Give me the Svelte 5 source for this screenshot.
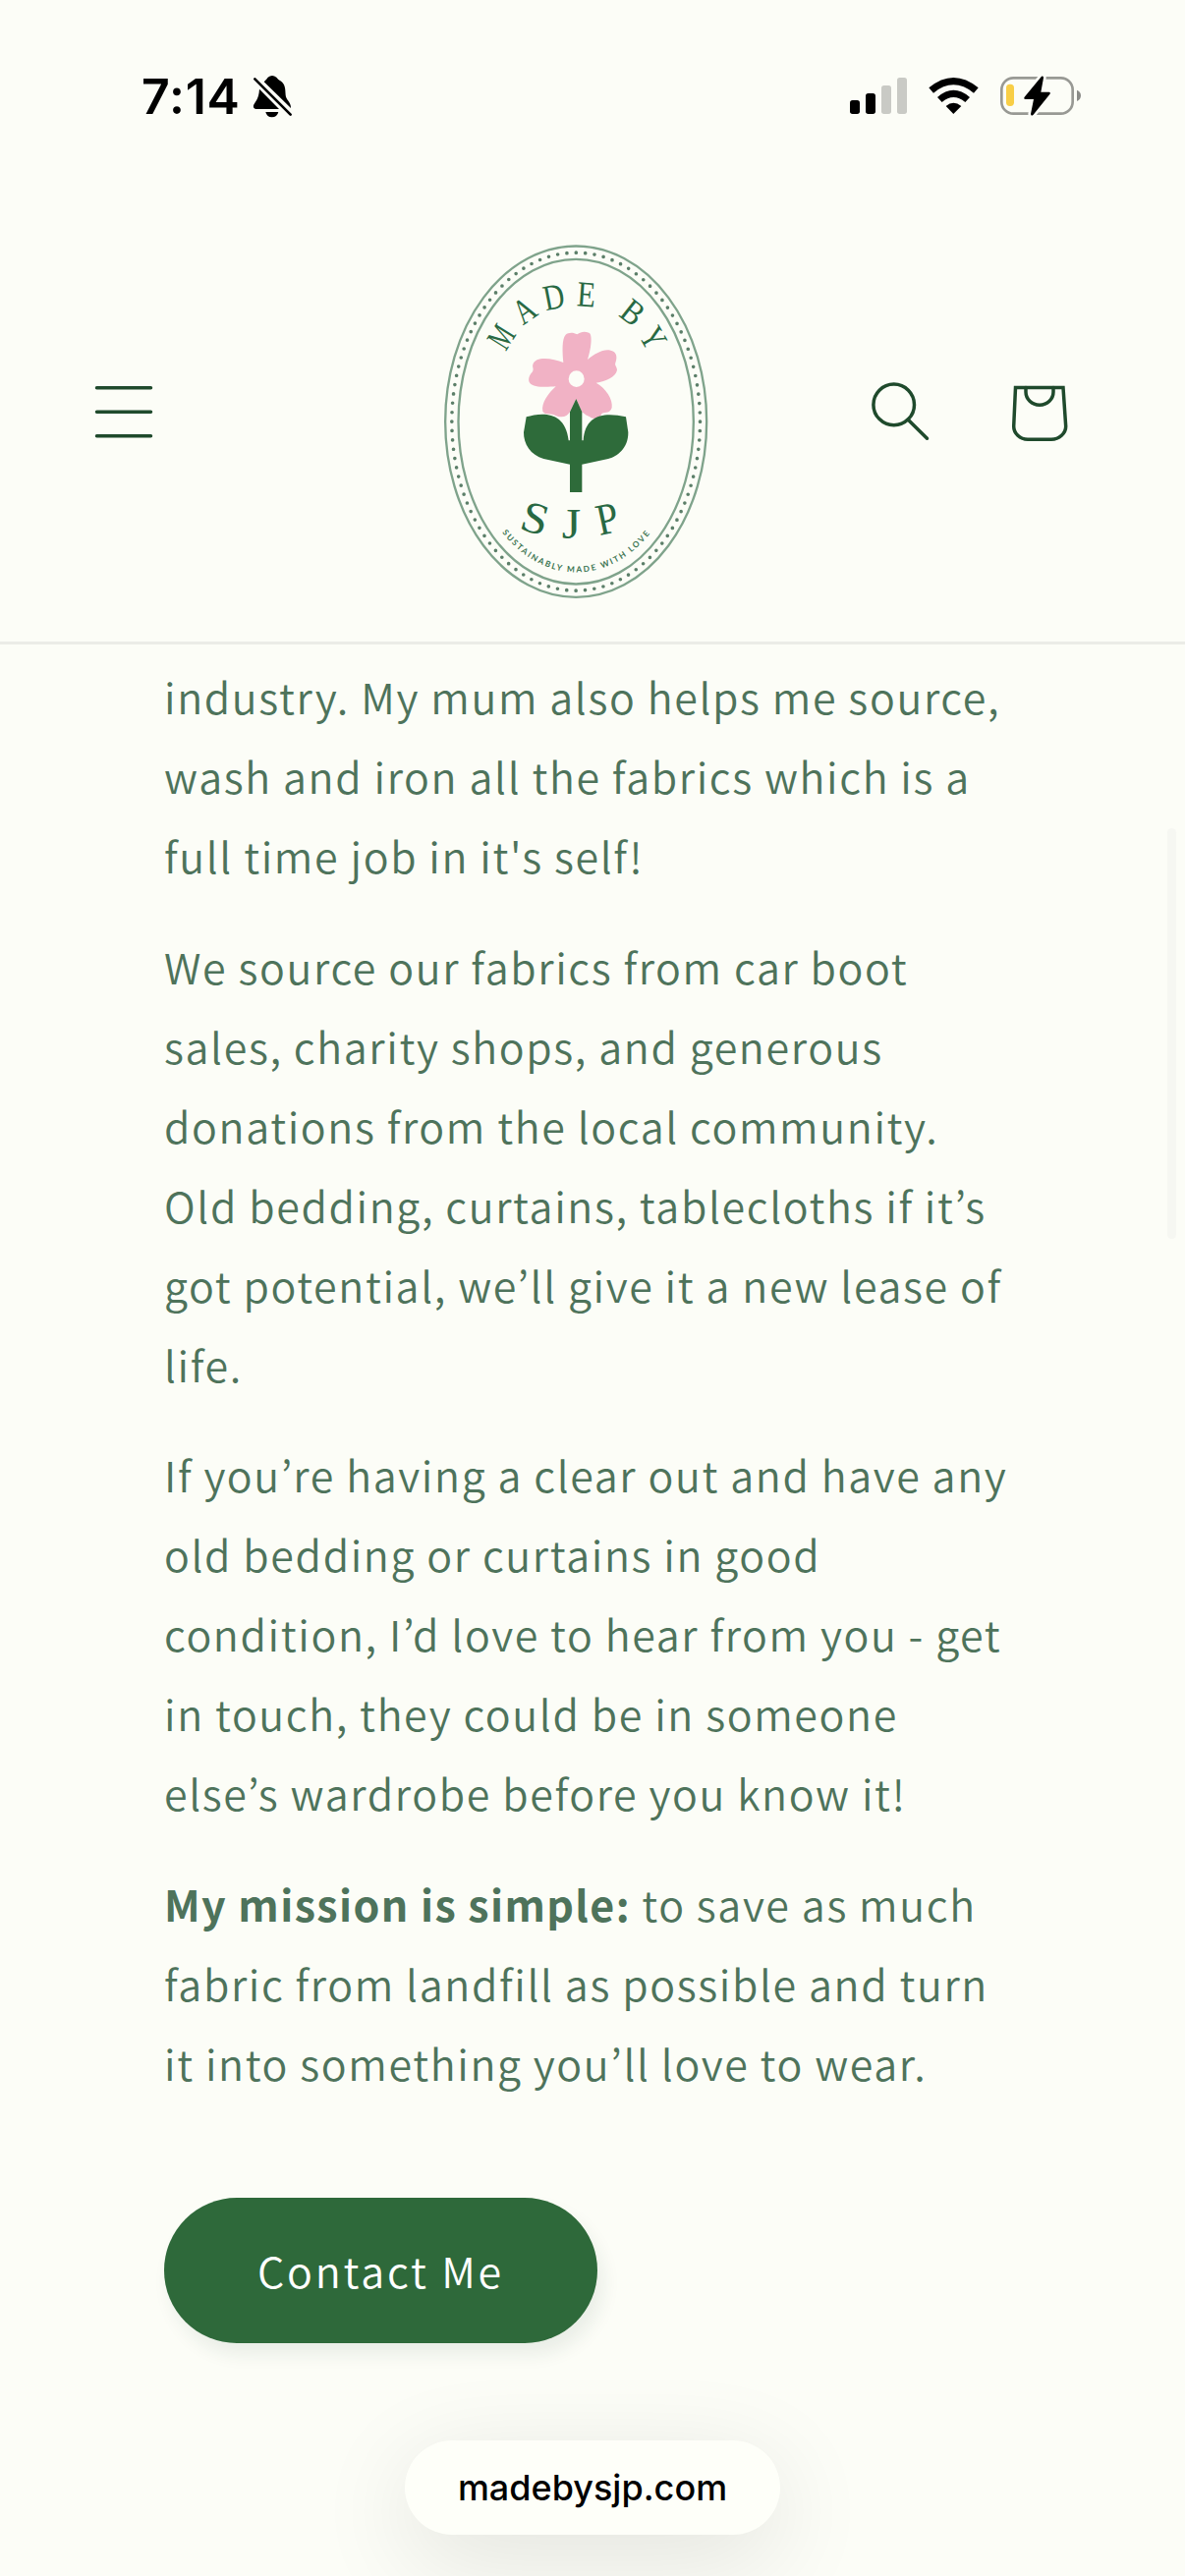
<script>
	const signal = [
		{ x: 75, y: 156, on: true },
		{ x: 123, y: 135, on: true },
		{ x: 171, y: 111, on: false },
		{ x: 219, y: 87, on: false }
	];

	// badge lettering: baseline centre, rotation, horizontal squeeze, size
	const letters = [
		{ char: 'M', x: 271, y: 357, rotate: -58, squeeze: 0.66, size: 108 },
		{ char: 'A', x: 332, y: 287, rotate: -35, squeeze: 0.78, size: 108 },
		{ char: 'D', x: 408, y: 253, rotate: -11, squeeze: 0.8, size: 110 },
		{ char: 'E', x: 498, y: 246, rotate: 4, squeeze: 0.84, size: 110 },
		{ char: 'B', x: 620, y: 292, rotate: 38, squeeze: 0.86, size: 106 },
		{ char: 'Y', x: 673, y: 360, rotate: 60, squeeze: 0.76, size: 108 },
		{ char: 'S', x: 331, y: 936, rotate: 17, squeeze: 1.08, size: 136 },
		{ char: 'J', x: 454, y: 953, rotate: 0, squeeze: 1.1, size: 136 },
		{ char: 'P', x: 573, y: 938, rotate: -12, squeeze: 0.88, size: 136 }
	];

	const paragraphs = [
		{
			lines: [
				'industry. My mum also helps me source,',
				'wash and iron all the fabrics which is a',
				"full time job in it's self!"
			]
		},
		{
			lines: [
				'We source our fabrics from car boot',
				'sales, charity shops, and generous',
				'donations from the local community.',
				'Old bedding, curtains, tablecloths if it’s',
				'got potential, we’ll give it a new lease of',
				'life.'
			]
		},
		{
			lines: [
				'If you’re having a clear out and have any',
				'old bedding or curtains in good',
				'condition, I’d love to hear from you - get',
				'in touch, they could be in someone',
				'else’s wardrobe before you know it!'
			]
		},
		{
			lead: 'My mission is simple:',
			lines: [
				' to save as much',
				'fabric from landfill as possible and turn',
				'it into something you’ll love to wear.'
			]
		}
	];
</script>

<div class="screen">
	<div class="status">
		<div class="clock">
			<span>7:14</span>
			<svg width="42" height="44" viewBox="408 78 126 132">
				<path
					d="M443 100C449 94 451 91 455 86Q468 76 481 86C485 91 487 93 493 97C508 107 508 120 509 140C510 155 526 162 525 180Z"
				/>
				<path d="M429 122L489 183H418Q409 181 411 172C415 160 427 155 429 122Z" />
				<path d="M448 192H487Q483 208 467 208Q452 208 448 192Z" />
				<path d="M415 91L524 200" stroke="#000" stroke-width="8" stroke-linecap="round" />
			</svg>
		</div>
		<div class="indicators">
			<svg width="58" height="44" viewBox="75 78 174 132">
				{#each signal as bar}
					<rect
						x={bar.x}
						y={bar.y}
						width="30"
						height={198 - bar.y}
						rx="8"
						fill={bar.on ? '#000' : '#c9cac5'}
					/>
				{/each}
			</svg>
			<svg width="51" height="44" viewBox="315 78 153 132">
				<path d="M316 118Q391 56 467 118L453 134Q391 84 330 134Z" />
				<path d="M342 147Q391 104 441 147L427 162Q391 132 356 162Z" />
				<path d="M368 174Q391 154 415 174L391 198Z" />
			</svg>
			<svg width="83" height="44" viewBox="534 78 249 132">
				<rect
					x="538"
					y="88"
					width="217"
					height="109"
					rx="36"
					fill="none"
					stroke="#989994"
					stroke-width="8"
				/>
				<path d="M768 125Q780 130 780 142Q780 154 768 159Z" fill="#8a8b87" />
				<rect x="552" y="107" width="24" height="67" rx="11" fill="#f8ce46" />
				<path
					class="bolt"
					d="M660 83Q667 81 666 88L658 131H683Q689 132 685 138L635 200Q628 206 627 198L636 153H611Q604 152 608 146Z"
				/>
			</svg>
		</div>
	</div>

	<header>
		<button class="icon" aria-label="Menu">
			<svg width="60" height="60" viewBox="0 0 60 60">
				<path d="M2.5 5.8H57.5M2.5 30.3H57.5M2.5 54.8H57.5" />
			</svg>
		</button>
		<a class="logo" href="/" aria-label="Made by SJP">
			<svg width="310" height="400" viewBox="0 0 930 1200">
				<g class="rings">
					<ellipse cx="468.5" cy="597.5" rx="399" ry="536" />
					<ellipse cx="468.5" cy="597.5" rx="359" ry="496" />
					<ellipse class="dots" cx="468.5" cy="597.5" rx="379" ry="516" pathLength="100" />
				</g>
				<g class="lettering">
					{#each letters as l}
						<text
							transform="translate({l.x} {l.y}) rotate({l.rotate}) scale({l.squeeze} 1)"
							font-size={l.size}>{l.char}</text
						>
					{/each}
				</g>
				<path id="tagline" d="M243 936A335 460 0 0 0 697 936" fill="none" />
				<text class="tagline">
					<textPath href="#tagline" textLength="528">SUSTAINABLY MADE WITH LOVE</textPath>
				</text>
				<path
					fill="#f1b2c5"
					fill-rule="evenodd"
					d="M472 331C460 324 445 325 437 332C425 345 427 385 430 417C400 405 345 395 337 423C334 432 342 437 335 446C325 456 321 471 328 480C338 494 380 492 407 490C385 510 362 540 367 566C378 580 392 570 405 578C425 588 442 582 450 568L469 528L487 568C500 580 507 580 515 586C525 591 541 588 548 572C560 568 573 572 578 555C582 530 560 495 530 479C560 475 590 460 594 440C594 430 586 427 589 418C594 405 594 392 584 384C560 370 530 387 504 408C515 375 520 330 508 326C492 320 484 324 472 331ZM470 442A24 25 0 1 0 470 492A24 25 0 1 0 470 442Z"
				/>
				<path
					fill="#2e6b3a"
					d="M317 583C360 571 435 560 446 655H450V568L469 528L487 568V655H491C497 575 555 569 621 583L628 630C629 680 592 705 567 711L487 728V813H450V728L370 711C330 700 308 665 309 630Z"
				/>
			</svg>
		</a>
		<div class="actions">
			<button class="icon" aria-label="Search">
				<svg width="60" height="60" viewBox="0 0 60 60">
					<circle cx="23.7" cy="22.9" r="20.8" />
					<path d="M38.5 38.4L57.5 57.2" />
				</svg>
			</button>
			<button class="icon" aria-label="Cart">
				<svg width="60" height="60" viewBox="0 0 60 60">
					<path d="M5.5 5.4H54L56.7 45C56.7 52 50 58.2 42 58.2H18C10 58.2 3.7 52 3.7 45Z" />
					<path d="M16 5.4V10C16 17 22 23.200 30 23.200S44 17 44 10V5.400" />
				</svg>
			</button>
		</div>
	</header>

	<main>
		{#each paragraphs as { lead, lines }}
			<p>
				{#if lead}<strong>{lead}</strong>{/if}{#each lines as line, i}{#if i}<br />{/if}{line}{/each}
			</p>
		{/each}
		<button class="contact">Contact Me</button>
	</main>

	<div class="scrollbar"></div>
	<div class="address">madebysjp.com</div>
</div>

<style>
	:global(body) {
		margin: 0;
		background: #fcfdf7;
	}

	.screen {
		position: relative;
		width: 1206px;
		height: 2622px;
		overflow: hidden;
		background: #fcfdf7;
	}

	svg {
		display: block;
	}

	button {
		border: 0;
		padding: 0;
		background: none;
	}

	.status {
		display: flex;
		justify-content: space-between;
		align-items: center;
		box-sizing: border-box;
		height: 184px;
		padding: 12px 105px 0 144px;
	}

	.clock,
	.indicators {
		display: flex;
		align-items: center;
		height: 44px;
	}

	.clock {
		gap: 12px;
		font: 600 50px/44px Inter, sans-serif;
		letter-spacing: 0.8px;
	}

	.indicators {
		gap: 22px;
	}

	.bolt {
		stroke: #fcfdf7;
		stroke-width: 16;
		paint-order: stroke;
	}

	header {
		display: grid;
		grid-template-columns: 334px 310px 1fr;
		align-items: center;
		height: 469px;
		padding: 0 118px 0 96px;
		border-bottom: 3px solid #ebece7;
	}

	.icon {
		width: 60px;
	}

	.icon svg {
		fill: none;
		stroke: #1f4a2c;
		stroke-width: 3.5;
		stroke-linecap: round;
	}

	.logo {
		margin-top: 23px;
	}

	.rings {
		fill: none;
		stroke: #7fa38b;
		stroke-width: 7;
	}

	.dots {
		stroke: #5c7f69;
		stroke-width: 11;
		stroke-linecap: round;
		stroke-dasharray: 0 1;
	}

	.lettering {
		fill: #286943;
		font-family: 'Liberation Serif', serif;
		text-anchor: middle;
	}

	.tagline {
		fill: #3d7553;
		font: 700 25px Lato, sans-serif;
	}

	.actions {
		display: flex;
		justify-content: flex-end;
		gap: 82px;
	}

	main {
		padding: 12px 120px 0 167px;
		font-family: 'Noto Sans CJK KR', sans-serif;
	}

	p {
		margin: 0 0 31.5px;
		color: #4e735b;
		font-size: 43px;
		font-weight: 350;
		line-height: 81px;
		letter-spacing: 1.61px;
		white-space: nowrap;
	}

	strong {
		font-weight: 700;
		letter-spacing: 1.4px;
	}

	.contact {
		display: block;
		width: 441px;
		height: 148px;
		margin-top: 97px;
		padding-bottom: 2px;
		border-radius: 74px;
		background: #2e693a;
		box-shadow: 6px 12px 18px rgba(30, 70, 45, 0.08);
		color: #fff;
		font: 350 43px 'Noto Sans CJK KR', sans-serif;
		letter-spacing: 2.8px;
	}

	.scrollbar {
		position: absolute;
		top: 843px;
		right: 9px;
		width: 9px;
		height: 418px;
		border-radius: 5px;
		background: #f6f7f2;
	}

	.address {
		position: absolute;
		top: 2484px;
		left: 412px;
		width: 382px;
		height: 96px;
		border-radius: 48px;
		background: #fefff9;
		box-shadow: 0 24px 100px rgba(0, 0, 0, 0.11);
		color: #000;
		font: 500 36px/96px Inter, sans-serif;
		text-align: center;
	}
</style>
